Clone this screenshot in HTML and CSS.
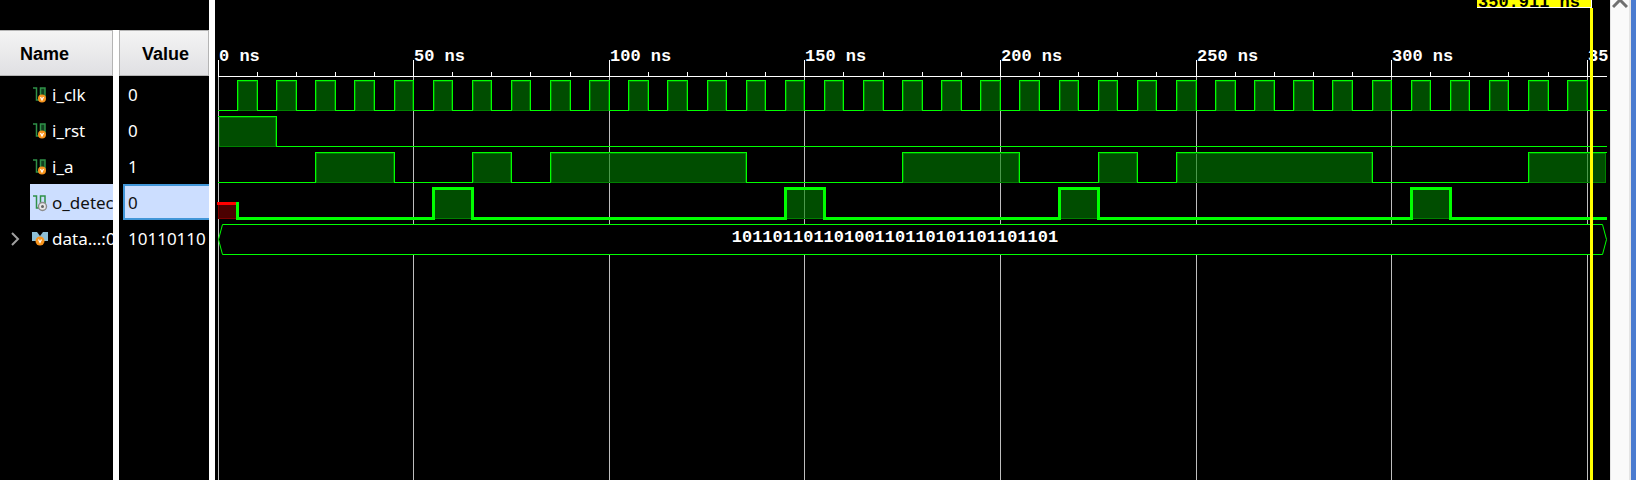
FILE: index.html
```
<!DOCTYPE html>
<html lang="en">
<head>
<meta charset="utf-8">
<title>Waveform viewer</title>
<link rel="stylesheet" href="styles.css">
</head>
<body>
<svg class="defs" aria-hidden="true">
  <defs>
    <symbol id="wire" viewBox="0 0 16 18">
      <path class="wire-line" d="M1 2H4.500V14H8.500V2H13V11"/>
    </symbol>
    <symbol id="input" viewBox="0 0 16 18">
      <path d="M8.500 2H13V10H8.500Z" fill="#12401f"/>
      <use href="#wire"/>
      <circle cx="10" cy="12.500" r="4" fill="#f7941d"/>
      <path d="M8.500 11L10 14L11.500 11" fill="none" stroke="#fff" stroke-width="1.200"/>
    </symbol>
    <symbol id="output" viewBox="0 0 16 18">
      <use href="#wire"/>
      <circle cx="10.500" cy="12.500" r="4" fill="#e8e8e8" stroke="#8c8c8c" stroke-width="1.400"/>
      <circle cx="10.500" cy="12.500" r="1.500" fill="#666"/>
    </symbol>
    <symbol id="bus" viewBox="0 0 16 18">
      <path d="M0 2H5L8 6L11 2H16V11H11L8 8L5 11H0Z" fill="#8dbfd6"/>
      <circle cx="8" cy="11" r="4.500" fill="#f7941d"/>
      <path d="M6.500 9.500L8 12.500L9.500 9.500" fill="none" stroke="#fff" stroke-width="1.200"/>
    </symbol>
  </defs>
</svg>
<main class="viewer">
  <section class="column names">
    <h2 class="head">Name</h2>
    <ul class="rows">
      <li class="row"><svg class="icon"><use href="#input"/></svg><span>i_clk</span></li>
      <li class="row"><svg class="icon"><use href="#input"/></svg><span>i_rst</span></li>
      <li class="row"><svg class="icon"><use href="#input"/></svg><span>i_a</span></li>
      <li class="row selected"><svg class="icon"><use href="#output"/></svg><span>o_detec</span></li>
      <li class="row parent"><button class="expand" aria-label="Expand data"><svg viewBox="0 0 10 14"><path d="M2 1L8 7L2 13"/></svg></button><svg class="icon"><use href="#bus"/></svg><span>data...:0</span></li>
    </ul>
  </section>
  <section class="column values">
    <h2 class="head">Value</h2>
    <ul class="rows">
      <li class="row">0</li>
      <li class="row">0</li>
      <li class="row">1</li>
      <li class="row selected">0</li>
      <li class="row">10110110</li>
    </ul>
  </section>
  <section class="plot"><svg id="waves" class="waves" role="img" aria-label="Signal waveforms"></svg></section>
  <aside class="scroll"><button class="up" aria-label="Scroll up"><svg viewBox="0 0 16 10"><path d="M1 7L8 0L15 7"/></svg></button></aside>
</main>
<script src="waves.js"></script>
</body>
</html>
```

FILE: styles.css
```
body {
  margin: 0;
  background: #fff;
  font-family: "Noto Sans", sans-serif;
}

.defs {
  position: absolute;
  width: 0;
  height: 0;
}

.viewer {
  display: grid;
  grid-template-columns: 113px 90px minmax(0, 1fr);
  grid-template-columns: 119px 96px minmax(0, 1fr) 21px;
  min-height: 100vh;
  padding-right: 18px;
  box-sizing: border-box;
}

.column {
  margin-right: 6px;
  padding-top: 30px;
  background: #000;
  overflow: hidden;
}

.names {
  box-shadow: 6px -450px 0 #000;
}

.head {
  height: 46px;
  margin: 0;
  box-sizing: border-box;
  border: 1px solid #b4b4b4;
  background: linear-gradient(#f4f4f4, #e0e0e3);
  color: #000;
  font: bold 18px/46px "Liberation Sans", Arial, sans-serif;
}

.names .head {
  padding-left: 20px;
  border-left: 0;
}

.values .head {
  padding-left: 22px;
}

.rows {
  margin: 0;
  padding: 0;
  list-style: none;
}

.row {
  display: flex;
  align-items: center;
  box-sizing: border-box;
  height: 36px;
  padding-top: 1px;
  color: #fff;
  font-size: 17px;
  line-height: 34px;
  white-space: nowrap;
}

.names .row {
  gap: 4px;
  margin-left: 30px;
  padding-left: 2px;
}

.names .parent {
  margin-left: 0;
  padding-left: 10px;
}

.values .row {
  margin-left: 4px;
  padding-left: 5px;
}

.row.selected {
  background: #ccdeff;
  color: #111;
}

.values .selected {
  border: 2px solid #4196d8;
  border-right: 0;
  padding-left: 3px;
}

.icon {
  flex: none;
  width: 16px;
  height: 18px;
}

.wire-line {
  fill: none;
  stroke: #2f9148;
  stroke-width: 1.5;
}

.expand,
.up {
  display: flex;
  padding: 0;
  border: 0;
  background: none;
}

.expand {
  flex: none;
  width: 18px;
}

.expand svg {
  width: 10px;
  height: 14px;
}

.expand path,
.up path {
  fill: none;
  stroke: #a0a0a0;
  stroke-width: 2;
}

.plot {
  background: #000;
  overflow: hidden;
}

.waves {
  display: block;
  width: 100%;
  height: 100%;
}

.waves text {
  fill: #fff;
  font: bold 17px "Liberation Mono", monospace;
}

.waves .cursor-time {
  fill: #000;
}

.scroll {
  box-sizing: border-box;
  background: #fafafa;
  border-right: 2px solid #e4e4e4;
  border-left: 1px solid #e4e4e4;
  box-shadow: 5px 0 0 #4a7bd0;
}

.up {
  margin: 0 auto;
}

.up svg {
  width: 16px;
  height: 10px;
}

.up path {
  stroke: #707070;
  stroke-width: 3;
}
```

FILE: waves.js
```
const svg = document.getElementById("waves");
const origin = 3;
const scale = 3.912;
const end = 355;
const px = (ns) => Math.floor(origin + ns * scale);

function add(name, attrs, text) {
  const el = document.createElementNS("http://www.w3.org/2000/svg", name);
  for (const key in attrs) el.setAttribute(key, attrs[key]);
  if (text) el.textContent = text;
  svg.appendChild(el);
}

function box(x, y, width, height, fill) {
  add("rect", { x, y, width, height, fill });
}

const right = px(end) + 1;

for (let ns = 0; ns <= 350; ns += 10) {
  if (ns % 50) {
    box(px(ns), 72, 1, 4, "#fff");
  } else {
    box(px(ns), 60, 1, 16, "#fff");
    box(px(ns), 77, 1, "100%", "#bebebe");
    add("text", { x: px(ns) + 1, y: 61 }, ns === 350 ? "35" : ns + " ns");
  }
}
box(origin, 76, right - origin, 1, "#fff");

function signal(top, pulses, size) {
  const half = (size - 1) / 2;
  const low = top + 30;
  let start = size > 1 ? px(5) : origin;
  for (const [from, to] of pulses) {
    const a = px(from);
    const b = px(to);
    add("rect", { x: a + 1.5, y: top + 1.5, width: b - a - 2, height: 29, fill: "#008000", "fill-opacity": 0.6, stroke: "#008000" });
    if (a > start) box(start - half, low - half, a - start + size, size, "#0f0");
    if (a > origin) box(a - half, top - half, size, 30 + size, "#0f0");
    box(a - half, top - half, b - a + size, size, "#0f0");
    if (to < end) box(b - half, top - half, size, 30 + size, "#0f0");
    start = b;
  }
  if (start < px(end)) box(start - half, low - half, right - start + half, size, "#0f0");
}

const clock = [];
for (let ns = 5; ns < 350; ns += 10) clock.push([ns, ns + 5]);

signal(80, clock, 1);
signal(116, [[0, 15]], 1);
signal(152, [[25, 45], [65, 75], [85, 135], [175, 205], [225, 235], [245, 295], [335, end]], 1);

// Unknown state before the first clock edge.
add("rect", { x: 3.5, y: 204.5, width: 18, height: 14, fill: "#4b0000", stroke: "#800000" });
box(2, 202, 20, 3, "#f00");
box(21, 202, 3, 18, "#0f0");
signal(188, [[55, 65], [145, 155], [215, 225], [305, 315]], 3);

const tip = right - 1;
add("path", {
  d: `M3.5 239.500L7.500 224.500H${tip - 3.5}L${tip + 0.5} 239.500L${tip - 3.5} 254.500H7.500Z`,
  fill: "#000", stroke: "#0f0"
});
add("text", { x: 680, y: 242, "text-anchor": "middle" }, "10110110110100110110101101101101");

box(1262, 0, 115, 8, "#fff");
box(1262, 0, 114, 7, "#ff0");
add("text", { x: 1263, y: 7, class: "cursor-time" }, "350.911 ns");
box(1375, 8, 3, "100%", "#ff0");
```
